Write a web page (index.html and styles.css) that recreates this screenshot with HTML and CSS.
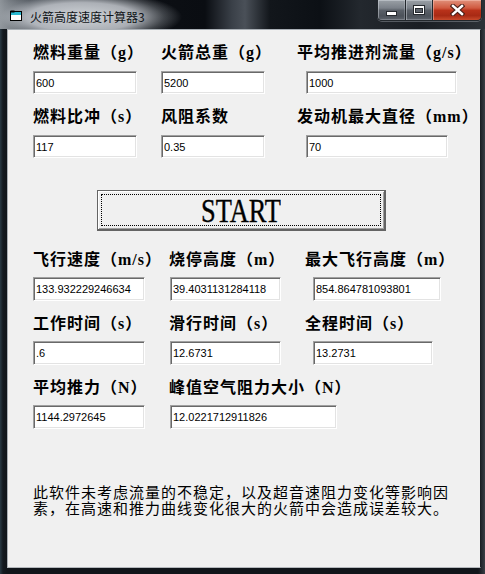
FILE: index.html
```html
<!DOCTYPE html>
<html lang="zh-CN">
<head>
<meta charset="utf-8">
<title>火箭高度速度计算器3</title>
<link rel="stylesheet" href="styles.css">
</head>
<body>
<div class="window">
  <div class="titlebar">
    <svg class="appicon" width="12" height="11" viewBox="0 0 12 11">
      <rect x="0.5" y="1.5" width="11" height="9" fill="#fff" stroke="#000"/>
      <rect x="1" y="2" width="10" height="3" fill="#2ab8d0"/>
      <rect x="0.5" y="0.5" width="4" height="2" fill="#000"/>
    </svg>
    <span class="title">火箭高度速度计算器3</span>
    <div class="caps">
      <div class="cap cap-min">
        <svg width="11" height="5" viewBox="0 0 11 5"><rect x="0.5" y="0.5" width="10" height="4" fill="#fff" stroke="#25292e"/></svg>
      </div>
      <div class="cap cap-max">
        <svg width="12" height="10" viewBox="0 0 12 10"><rect x="0.5" y="0.5" width="11" height="9" fill="#fff" stroke="#25292e"/><rect x="2.5" y="3.5" width="7" height="4" fill="#5d636b" stroke="#25292e"/></svg>
      </div>
      <div class="cap cap-close">
        <svg width="15" height="12" viewBox="0 0 15 12"><path d="M3 2 L12 10 M12 2 L3 10" stroke="#4a2018" stroke-width="4.6" stroke-linecap="square" fill="none"/><path d="M3 2 L12 10 M12 2 L3 10" stroke="#fff" stroke-width="2.4" stroke-linecap="square" fill="none"/></svg>
      </div>
    </div>
  </div>
  <div class="client">
    <div class="grid grid-in">
      <div class="field"><div class="lbl">燃料重量（g）</div><input class="tb w104" type="text" value="600" readonly></div>
      <div class="field"><div class="lbl">火箭总重（g）</div><input class="tb w104" type="text" value="5200" readonly></div>
      <div class="field"><div class="lbl">平均推进剂流量（g/s）</div><input class="tb w151 off9" type="text" value="1000" readonly></div>
      <div class="field"><div class="lbl">燃料比冲（s）</div><input class="tb w104" type="text" value="117" readonly></div>
      <div class="field"><div class="lbl">风阻系数</div><input class="tb w104" type="text" value="0.35" readonly></div>
      <div class="field"><div class="lbl">发动机最大直径（mm）</div><input class="tb w142 off9" type="text" value="70" readonly></div>
    </div>

    <div class="start"><div class="focus"><span class="start-text">START</span></div></div>

    <div class="grid grid-out">
      <div class="field"><div class="lbl">飞行速度（m/s）</div><input class="tb tb24 w112" type="text" value="133.932229246634" readonly></div>
      <div class="field"><div class="lbl">烧停高度（m）</div><input class="tb tb24 w111 off1" type="text" value="39.4031131284118" readonly></div>
      <div class="field"><div class="lbl">最大飞行高度（m）</div><input class="tb tb24 w128 off8" type="text" value="854.864781093801" readonly></div>
      <div class="field"><div class="lbl">工作时间（s）</div><input class="tb tb24 w112" type="text" value=".6" readonly></div>
      <div class="field"><div class="lbl">滑行时间（s）</div><input class="tb tb24 w111 off1" type="text" value="12.6731" readonly></div>
      <div class="field"><div class="lbl">全程时间（s）</div><input class="tb tb24 w120 off8" type="text" value="13.2731" readonly></div>
      <div class="field"><div class="lbl">平均推力（N）</div><input class="tb tb24 w112" type="text" value="1144.2972645" readonly></div>
      <div class="field span2"><div class="lbl">峰值空气阻力大小（N）</div><input class="tb tb24 w167 off1" type="text" value="12.0221712911826" readonly></div>
    </div>

    <div class="note">
      <div class="note-line">此软件未考虑流量的不稳定，以及超音速阻力变化等影响因</div>
      <div class="note-line">素，在高速和推力曲线变化很大的火箭中会造成误差较大。</div>
    </div>
  </div>
</div>
</body>
</html>
```

FILE: styles.css
```css
html, body {
  margin: 0;
  padding: 0;
  background: #000;
  overflow: hidden;
}

.window {
  width: 485px;
  height: 574px;
  display: flex;
  flex-direction: column;
  background:
    linear-gradient(90deg, #2a3a44 0, #141a20 3px, #11151a 7px, #11151a 478px, #20252b 481px, #3a3f45 485px);
}

.titlebar {
  height: 29px;
  display: flex;
  align-items: flex-start;
  background:
    radial-gradient(ellipse 100px 26px at 82px 17px, rgba(214,218,222,0.97) 0%, rgba(196,200,206,0.85) 55%, rgba(160,166,172,0.35) 82%, rgba(120,126,132,0) 100%),
    linear-gradient(90deg, #8e949a 0, #3a4048 30px, #0c0f14 150px, #0a0d12 205px, #3a4048 232px, #4a5058 245px, #12161b 270px, #0c1015 320px, #23282e 360px, #1a1e24 420px, #2c3137 485px);
}

.appicon {
  margin: 10px 0 0 10px;
  flex: none;
}

.title {
  margin: 10px 0 0 8px;
  font: 12px/14px "Noto Sans CJK SC", "Liberation Sans", sans-serif;
  color: #101418;
  white-space: nowrap;
}

.caps {
  margin-left: auto;
  margin-right: 3px;
  display: flex;
  height: 21px;
  box-sizing: border-box;
  border: 1px solid #22272c;
  border-top: none;
  border-radius: 0 0 5px 5px;
  overflow: hidden;
  box-shadow: 0 1px 0 rgba(190,196,202,0.35);
}

.cap {
  height: 100%;
  display: flex;
  align-items: center;
  justify-content: center;
  box-sizing: border-box;
}

.cap-min, .cap-max {
  background: linear-gradient(#9aa0a6 0, #7b8189 40%, #5a6068 52%, #4c525a 80%, #5e646c 100%);
  box-shadow: inset 1px 1px rgba(220,225,230,0.45), inset -1px -1px rgba(220,225,230,0.25);
  border-right: 1px solid #22272c;
}

.cap-min { width: 28px; padding-top: 6px; }
.cap-max { width: 27px; padding-bottom: 1px; }

.cap-close {
  width: 48px;
  background: linear-gradient(#e0907a 0, #d05a40 40%, #b8321a 52%, #a82a14 78%, #c84a2c 100%);
  box-shadow: inset 1px 1px rgba(255,210,200,0.45);
}

.client {
  flex: none;
  margin-left: 7px;
  width: 474px;
  height: 539px;
  box-sizing: border-box;
  border: 1px solid;
  border-color: #a9afb5 #1c2025 #b4b8bc #a9afb5;
  background: #f0f0f0;
  padding: 14px 0 0 25px;
  display: flex;
  flex-direction: column;
}

.grid {
  display: grid;
  row-gap: 14px;
}

.grid-in {
  grid-template-columns: 128px 136px 1fr;
}

.grid-out {
  grid-template-columns: 136px 136px 1fr;
  margin-top: 20px;
}

.field {
  display: flex;
  flex-direction: column;
  gap: 9px;
  align-items: flex-start;
}

.grid-out .field { gap: 8px; }

.span2 { grid-column: 2 / span 2; }

.lbl {
  font: 700 16px/18px "Liberation Serif", "Noto Sans CJK SC", serif;
  letter-spacing: 1px;
  color: #000;
  white-space: nowrap;
}

.tb {
  box-sizing: border-box;
  height: 23px;
  margin: 0;
  padding: 0 2px;
  border: 1px solid;
  border-color: #a0a0a0 #ffffff #ffffff #a0a0a0;
  box-shadow: inset 1px 1px #696969, inset -1px -1px #e3e3e3;
  background: #fff;
  font: 11px "Liberation Sans", Arial, sans-serif;
  color: #000;
  outline: none;
}

.tb24 { height: 24px; }

.w104 { width: 104px; }
.w111 { width: 111px; }
.w112 { width: 112px; }
.w120 { width: 120px; }
.w128 { width: 128px; }
.w142 { width: 142px; }
.w151 { width: 151px; }
.w167 { width: 167px; }

.off1 { margin-left: 1px; }
.off8 { margin-left: 8px; }
.off9 { margin-left: 9px; }

.start {
  margin: 32px 0 0 64px;
  width: 289px;
  height: 41px;
  box-sizing: border-box;
  border: 1px solid #646464;
  box-shadow: inset -1px -1px #646464, inset 1px 1px #ffffff, inset -2px -2px #a0a0a0;
  background: #f0f0f0;
  padding: 3px 4px 4px 3px;
  display: flex;
}

.focus {
  flex: 1;
  border: 1px dotted #000;
  display: flex;
  align-items: center;
  justify-content: center;
}

.start-text {
  display: inline-block;
  font: 33px/30px "Liberation Serif", "Times New Roman", serif;
  color: #000;
  transform: scaleX(0.8);
  margin-top: 1px;
  -webkit-text-stroke: 0.4px #000;
}

.note {
  margin: 55px 0 0 0;
  font: 400 15px/16px "Noto Sans CJK SC", "Liberation Sans", sans-serif;
  letter-spacing: 1px;
  color: #000;
  white-space: nowrap;
}

.note-line {
  height: 16px;
}
```
